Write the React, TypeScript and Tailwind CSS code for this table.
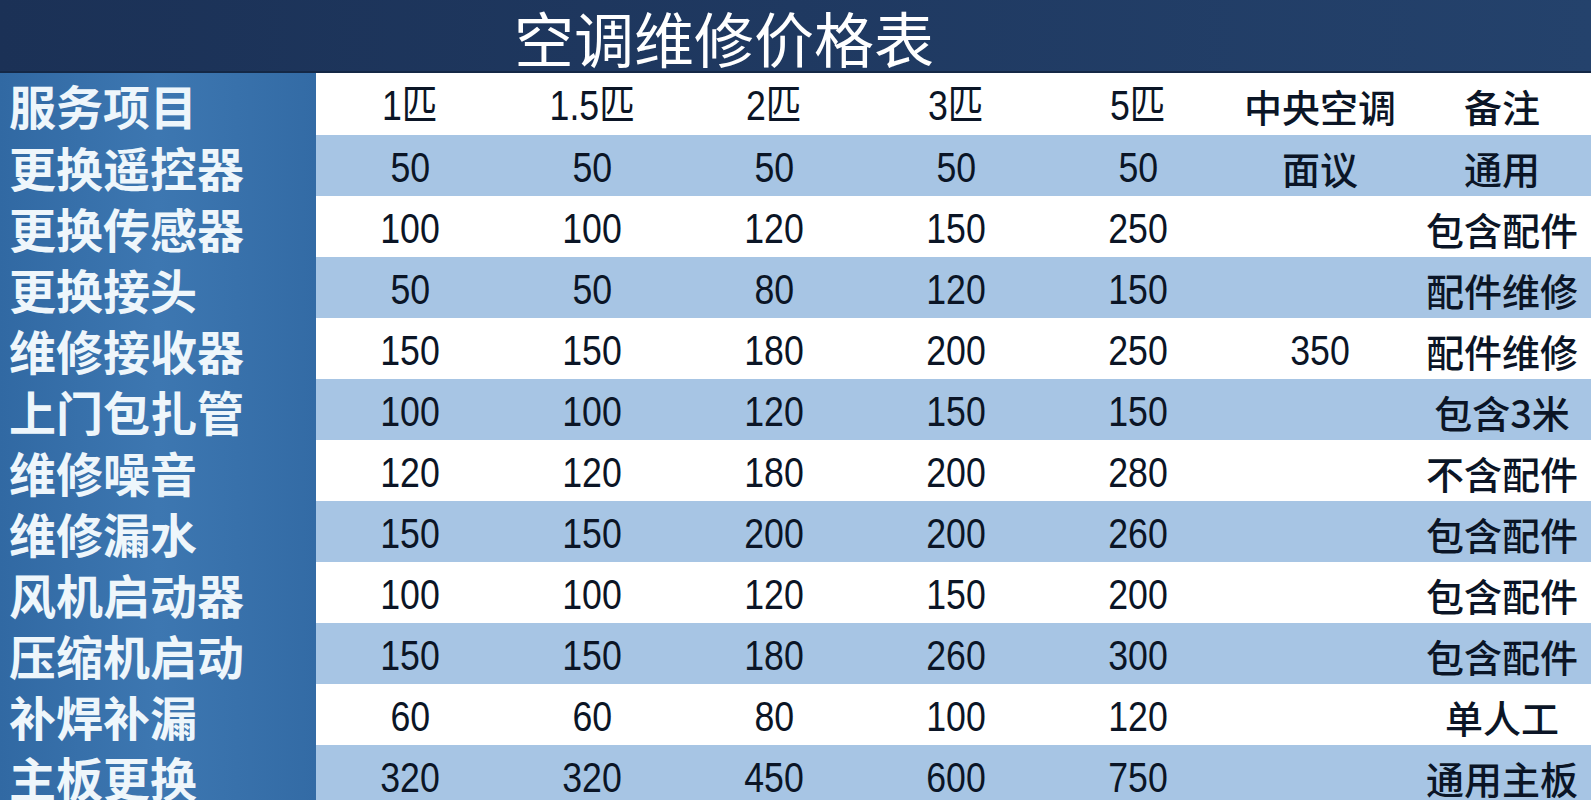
const header = ['1匹', '1.5匹', '2匹', '3匹', '5匹', '中央空调', '备注']

const rows: [string, string[]][] = [
  ['更换遥控器', ['50', '50', '50', '50', '50', '面议', '通用']],
  ['更换传感器', ['100', '100', '120', '150', '250', '', '包含配件']],
  ['更换接头', ['50', '50', '80', '120', '150', '', '配件维修']],
  ['维修接收器', ['150', '150', '180', '200', '250', '350', '配件维修']],
  ['上门包扎管', ['100', '100', '120', '150', '150', '', '包含3米']],
  ['维修噪音', ['120', '120', '180', '200', '280', '', '不含配件']],
  ['维修漏水', ['150', '150', '200', '200', '260', '', '包含配件']],
  ['风机启动器', ['100', '100', '120', '150', '200', '', '包含配件']],
  ['压缩机启动', ['150', '150', '180', '260', '300', '', '包含配件']],
  ['补焊补漏', ['60', '60', '80', '100', '120', '', '单人工']],
  ['主板更换', ['320', '320', '450', '600', '750', '', '通用主板']],
]

const cjk = "font-['Noto_Sans_CJK_SC',sans-serif]"
const num = "font-['Liberation_Sans','Noto_Sans_CJK_SC',sans-serif]"

function Cell({ text }: { text: string }) {
  if (!text) return <div />
  const isNum = /^[0-9.]/.test(text)
  return (
    <div className="flex items-center justify-center pt-[4px]">
      {isNum ? (
        <span className={`${num} inline-block scale-x-[0.85] text-[42px] leading-none text-[#0b1526]`}>{text}</span>
      ) : (
        <span className={`${cjk} text-[38px] font-medium leading-none text-[#0b1526]`}>{text}</span>
      )}
    </div>
  )
}

export default function App() {
  return (
    <div className="flex h-[800px] w-[1591px] flex-col overflow-hidden bg-white">
      <div className="flex h-[73px] shrink-0 items-center border-b-2 border-[#142846] bg-gradient-to-r from-[#1b3156] via-[#1f3961] to-[#24426c] pl-[514px]">
        <h1 className={`${cjk} pt-[2px] text-[60px] font-normal leading-[66px] text-white`}>
          空调维修价格表
        </h1>
      </div>
      <div className="flex flex-1">
        <div className="flex w-[316px] shrink-0 flex-col bg-gradient-to-r from-[#3169a3] via-[#3d77b1] to-[#336ba5]">
          {['服务项目', ...rows.map(r => r[0])].map((label, i) => (
            <div
              key={label}
              className={`flex shrink-0 items-center pl-[9px] pt-[2px] ${i === 0 ? 'h-[62px]' : 'h-[61px]'}`}
            >
              <span className={`${cjk} text-[47px] font-bold leading-[54px] text-[#eef6fb]`}>{label}</span>
            </div>
          ))}
        </div>
        <div className="flex flex-1 flex-col">
          <div className="grid h-[62px] shrink-0 grid-cols-[repeat(7,182px)] bg-white pl-[3px]">
            {header.map(h => (
              <Cell key={h} text={h} />
            ))}
          </div>
          {rows.map(([label, cells], i) => (
            <div
              key={label}
              className={`grid h-[61px] shrink-0 grid-cols-[repeat(7,182px)] pl-[3px] ${
                i % 2 === 0 ? 'bg-[#a7c5e4]' : 'bg-white'
              }`}
            >
              {cells.map((c, j) => (
                <Cell key={j} text={c} />
              ))}
            </div>
          ))}
        </div>
      </div>
    </div>
  )
}
